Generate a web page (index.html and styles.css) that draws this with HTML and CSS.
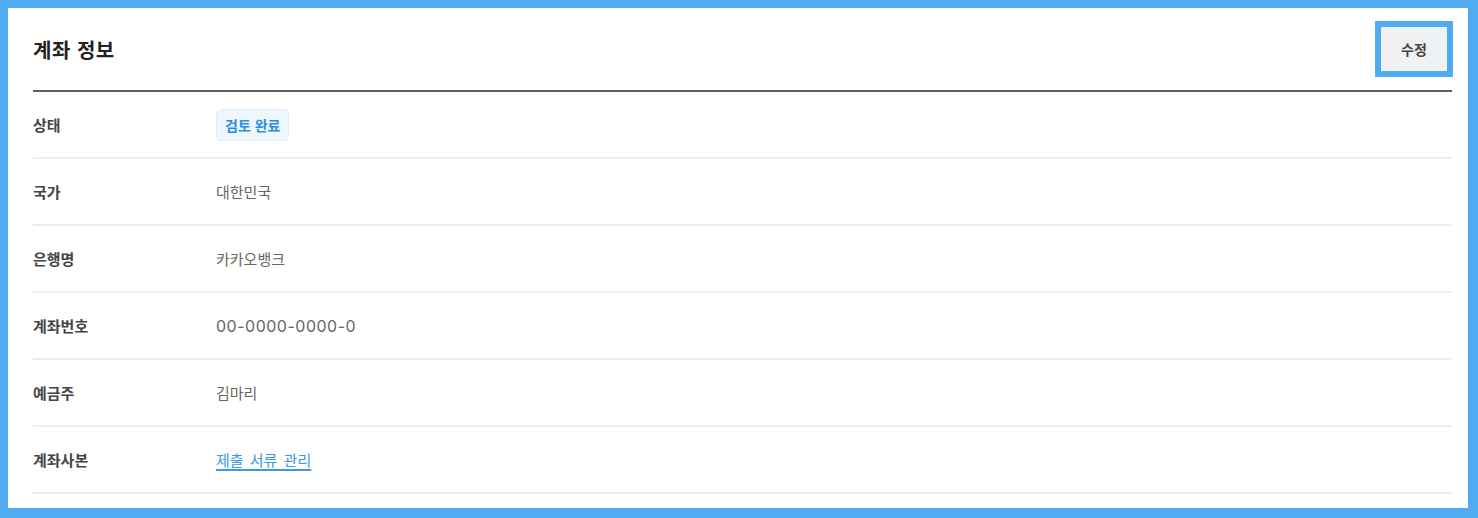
FILE: index.html
```html
<!DOCTYPE html>
<html lang="ko">
<head>
    <meta charset="UTF-8">
    <meta name="viewport" content="width=device-width, initial-scale=1.0">
    <title>계좌 정보</title>
    <link rel="stylesheet" href="styles.css">
</head>
<body>
    <div class="frame">
        <div class="panel">
            <div class="panel-header">
                <h2 class="panel-title">계좌 정보</h2>
                <button class="edit-btn">수정</button>
            </div>
            <div class="info-row">
                <div class="info-label">상태</div>
                <div class="info-value"><span class="badge">검토 완료</span></div>
            </div>
            <div class="info-row">
                <div class="info-label">국가</div>
                <div class="info-value">대한민국</div>
            </div>
            <div class="info-row">
                <div class="info-label">은행명</div>
                <div class="info-value">카카오뱅크</div>
            </div>
            <div class="info-row">
                <div class="info-label">계좌번호</div>
                <div class="info-value num">00-0000-0000-0</div>
            </div>
            <div class="info-row">
                <div class="info-label">예금주</div>
                <div class="info-value">김마리</div>
            </div>
            <div class="info-row">
                <div class="info-label">계좌사본</div>
                <div class="info-value"><a href="#" class="doc-link">제출 서류 관리</a></div>
            </div>
        </div>
    </div>
</body>
</html>
```

FILE: styles.css
```css
body {
    margin: 0;
    font-family: "Noto Sans CJK KR", "Noto Sans", sans-serif;
    background: #fff;
    color: #333;
}
.frame {
    box-sizing: border-box;
    height: 518px;
    border-style: solid;
    border-color: #4facf2;
    border-width: 8px 10px 10px 8px;
    background: #fff;
}
.panel {
    padding: 0 16px 0 25px;
}
.panel-header {
    display: flex;
    justify-content: space-between;
    align-items: center;
    padding: 13px 0;
    border-bottom: 2px solid #5b5e63;
}
.panel-title {
    margin: 0;
    font-size: 20px;
    font-weight: 700;
    letter-spacing: 0.5px;
    color: #222;
}
.edit-btn {
    box-sizing: border-box;
    width: 78px;
    height: 56px;
    margin-right: -1px;
    border: 6px solid #4facf2;
    background: #f0f1f3;
    font-family: inherit;
    font-size: 14px;
    font-weight: 700;
    color: #444;
    cursor: pointer;
}
.info-row {
    display: flex;
    align-items: center;
    height: 65px;
    border-bottom: 2px solid #eceef1;
}
.info-label {
    flex: 0 0 183px;
    font-size: 15px;
    font-weight: 700;
    color: #444;
}
.info-value {
    font-size: 15px;
    color: #666;
}
.info-value.num {
    font-family: Inter, "Noto Sans CJK KR", sans-serif;
    font-size: 16px;
    letter-spacing: 0.5px;
}
.badge {
    display: inline-block;
    padding: 5px 8px;
    border: 1px solid #e1eefb;
    border-radius: 5px;
    background: #eef6fe;
    color: #2b8de0;
    font-size: 14px;
    font-weight: 700;
}
.doc-link {
    color: #3a9ae8;
    word-spacing: 2px;
    text-decoration: underline;
    text-decoration-thickness: 2px;
    text-underline-offset: 3px;
}
```
